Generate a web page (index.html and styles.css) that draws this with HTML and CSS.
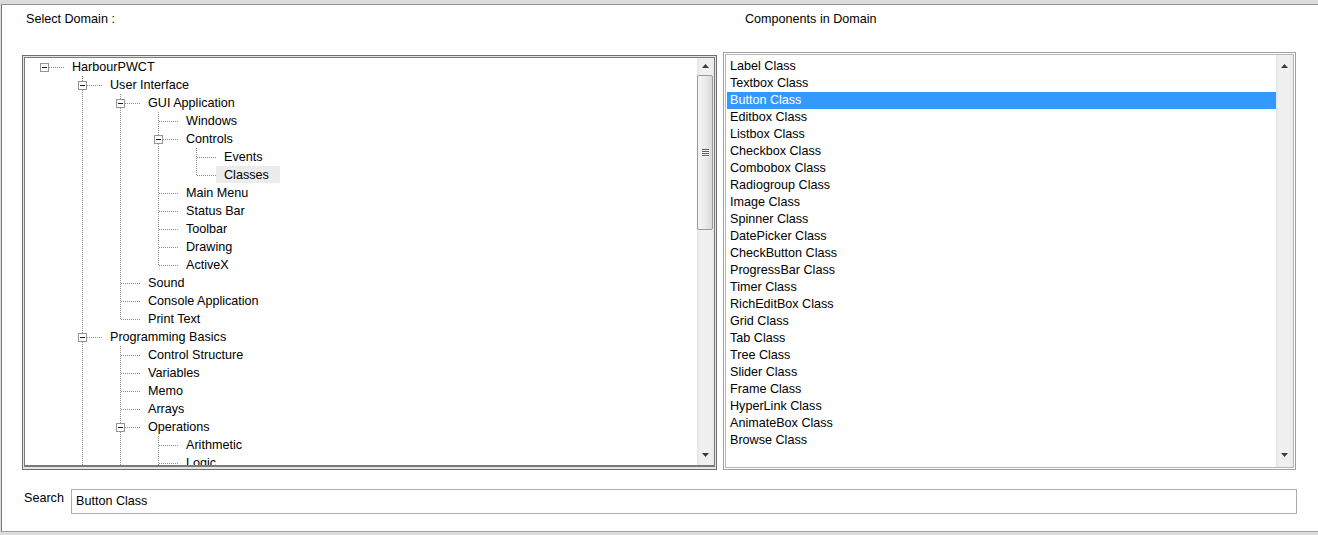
FILE: index.html
```html
<!DOCTYPE html>
<html>
<head>
<meta charset="utf-8">
<title>Select Domain</title>
<link rel="stylesheet" href="styles.css">
</head>
<body>
<div class="window">
  <div class="panes">
    <div class="caption caption-left">Select Domain :</div>
    <div class="caption caption-right">Components in Domain</div>

    <div class="box tree-box">
      <div class="box-inner tree-inner">
        <div class="tree-view">
          <ul class="tree">
            <li class="root"><div class="row"><span class="expander"></span><span class="lbl">HarbourPWCT</span></div>
              <ul>
                <li><div class="row"><span class="expander"></span><span class="lbl">User Interface</span></div>
                  <ul>
                    <li><div class="row"><span class="expander"></span><span class="lbl">GUI Application</span></div>
                      <ul>
                        <li><div class="row"><span class="lbl">Windows</span></div></li>
                        <li><div class="row"><span class="expander"></span><span class="lbl">Controls</span></div>
                          <ul>
                            <li><div class="row"><span class="lbl">Events</span></div></li>
                            <li><div class="row"><span class="lbl lbl-hilite">Classes</span></div></li>
                          </ul>
                        </li>
                        <li><div class="row"><span class="lbl">Main Menu</span></div></li>
                        <li><div class="row"><span class="lbl">Status Bar</span></div></li>
                        <li><div class="row"><span class="lbl">Toolbar</span></div></li>
                        <li><div class="row"><span class="lbl">Drawing</span></div></li>
                        <li><div class="row"><span class="lbl">ActiveX</span></div></li>
                      </ul>
                    </li>
                    <li><div class="row"><span class="lbl">Sound</span></div></li>
                    <li><div class="row"><span class="lbl">Console Application</span></div></li>
                    <li><div class="row"><span class="lbl">Print Text</span></div></li>
                  </ul>
                </li>
                <li><div class="row"><span class="expander"></span><span class="lbl">Programming Basics</span></div>
                  <ul>
                    <li><div class="row"><span class="lbl">Control Structure</span></div></li>
                    <li><div class="row"><span class="lbl">Variables</span></div></li>
                    <li><div class="row"><span class="lbl">Memo</span></div></li>
                    <li><div class="row"><span class="lbl">Arrays</span></div></li>
                    <li><div class="row"><span class="expander"></span><span class="lbl">Operations</span></div>
                      <ul>
                        <li><div class="row"><span class="lbl">Arithmetic</span></div></li>
                        <li><div class="row"><span class="lbl">Logic</span></div></li>
                        <li><div class="row"><span class="lbl">Comparison</span></div></li>
                      </ul>
                    </li>
                    <li><div class="row"><span class="lbl">Procedures</span></div></li>
                  </ul>
                </li>
                <li><div class="row"><span class="lbl">Database</span></div></li>
              </ul>
            </li>
          </ul>
        </div>
        <div class="vscroll">
          <div class="sb-btn sb-up-tree"><svg width="7" height="4" viewBox="0 0 7 4"><polygon points="3.5,0 7,4 0,4" fill="#3c3c3c"/></svg></div>
          <div class="thumb"><span class="grip"></span><span class="grip"></span><span class="grip"></span><span class="grip"></span></div>
          <div class="sb-fill"></div>
          <div class="sb-btn sb-down-tree"><svg width="7" height="4" viewBox="0 0 7 4"><polygon points="0,0 7,0 3.5,4" fill="#3c3c3c"/></svg></div>
        </div>
      </div>
    </div>

    <div class="box list-box">
      <div class="box-inner">
        <div class="list-items">
          <div class="item">Label Class</div>
          <div class="item">Textbox Class</div>
          <div class="item sel">Button Class</div>
          <div class="item">Editbox Class</div>
          <div class="item">Listbox Class</div>
          <div class="item">Checkbox Class</div>
          <div class="item">Combobox Class</div>
          <div class="item">Radiogroup Class</div>
          <div class="item">Image Class</div>
          <div class="item">Spinner Class</div>
          <div class="item">DatePicker Class</div>
          <div class="item">CheckButton Class</div>
          <div class="item">ProgressBar Class</div>
          <div class="item">Timer Class</div>
          <div class="item">RichEditBox Class</div>
          <div class="item">Grid Class</div>
          <div class="item">Tab Class</div>
          <div class="item">Tree Class</div>
          <div class="item">Slider Class</div>
          <div class="item">Frame Class</div>
          <div class="item">HyperLink Class</div>
          <div class="item">AnimateBox Class</div>
          <div class="item">Browse Class</div>
        </div>
        <div class="vscroll">
          <div class="sb-btn sb-up-list"><svg width="7" height="4" viewBox="0 0 7 4"><polygon points="3.5,0 7,4 0,4" fill="#3c3c3c"/></svg></div>
          <div class="sb-fill"></div>
          <div class="sb-btn sb-down"><svg width="7" height="4" viewBox="0 0 7 4"><polygon points="0,0 7,0 3.5,4" fill="#3c3c3c"/></svg></div>
        </div>
      </div>
    </div>
  </div>

  <div class="search-row">
    <label class="search-label" for="search">Search</label>
    <input class="search-input" id="search" type="text" value="Button Class">
  </div>
</div>
</body>
</html>
```

FILE: styles.css
```css
* { box-sizing: border-box; }

html, body { margin: 0; padding: 0; }

body {
  width: 1318px;
  height: 535px;
  overflow: hidden;
  padding: 4px 0 0 1px;
  background: #dcdcdc;
  font-family: "Liberation Sans", Arial, sans-serif;
  font-size: 12.6px;
  color: #000;
}

.window {
  width: 1330px;
  height: 528px;
  background: #fff;
  border-top: 1px solid #969696;
  border-left: 1px solid #7b7b7b;
  border-bottom: 1px solid #a3a3a3;
  padding-left: 20px;
}

.panes {
  display: grid;
  grid-template-columns: 695px 573px;
  grid-template-rows: 47px 418px;
  column-gap: 6px;
}

.caption {
  padding-top: 7px;
  line-height: 14px;
  white-space: nowrap;
}
.caption-left { padding-left: 4px; }
.caption-right { padding-left: 22px; }

.box {
  border: 1px solid #a0a0a0;
  padding: 1px;
  background: #fff;
}
.box-inner {
  height: 100%;
  border: 1px solid #b8b8b8;
  display: flex;
  background: #fff;
}

.tree-box {
  margin-top: 3px;
  height: 415px;
  padding: 1px 1px 2px 1px;
  border-color: #6f6f6f;
  background: #e4e4e4;
}
.tree-inner {
  border-color: #7a7a7a;
  border-bottom-width: 2px;
}

.list-box { height: 418px; }

/* ---------- tree ---------- */
.tree-view {
  flex: 1;
  overflow: hidden;
}
.tree, .tree ul {
  list-style: none;
  margin: 0;
  padding: 0;
}
.tree ul { padding-left: 38px; }
.tree li { position: relative; }
.tree li::before {
  content: "";
  position: absolute;
  left: 19px;
  top: 0;
  bottom: 0;
  width: 1px;
  background-image: linear-gradient(to bottom, #8c8c8c 50%, transparent 50%);
  background-size: 1px 2px;
}
.tree li:last-child::before { bottom: auto; height: 10px; }
.tree li.root::before { display: none; }

.row {
  position: relative;
  height: 18px;
  display: flex;
  padding-left: 39px;
}
.row::before {
  content: "";
  position: absolute;
  left: 20px;
  top: 9px;
  width: 19px;
  height: 1px;
  background-image: linear-gradient(to right, #8c8c8c 50%, transparent 50%);
  background-size: 2px 1px;
}
.expander {
  position: absolute;
  left: 15px;
  top: 5px;
  width: 9px;
  height: 9px;
  border: 1px solid #959595;
  background: #fff;
  z-index: 1;
}
.expander::after {
  content: "";
  position: absolute;
  left: 1px;
  top: 3px;
  width: 5px;
  height: 1px;
  background: #1a1a1a;
}
.lbl {
  height: 17px;
  line-height: 18px;
  padding: 0 11px 0 8px;
  white-space: nowrap;
}
.lbl-hilite { background: #ececec; }

/* ---------- scrollbars ---------- */
.vscroll {
  width: 17px;
  flex: none;
  display: flex;
  flex-direction: column;
  background: linear-gradient(to right, #e4e4e4, #f0f0f0 3px, #f0f0f0 14px, #e9e9e9);
}
.sb-btn {
  height: 17px;
  flex: none;
  display: flex;
  justify-content: center;
  align-items: flex-start;
}
.sb-btn svg { display: block; }
.sb-up-tree { padding-top: 6px; }
.sb-up-list { padding-top: 9px; }
.sb-down { padding-top: 3px; }
.sb-down-tree { padding-top: 5px; }
.sb-fill { flex: 1; }

.thumb {
  height: 155px;
  flex: none;
  margin: 0 1px 0 0;
  border: 1px solid #9a9a9a;
  border-radius: 2px;
  background: linear-gradient(to right, #f5f5f5, #ebebeb 50%, #dadada);
  display: flex;
  flex-direction: column;
  align-items: center;
  justify-content: center;
  gap: 1px;
}
.grip {
  display: block;
  width: 7px;
  height: 1px;
  background: #5c5c5c;
  box-shadow: 0 1px 0 #fafafa;
}

/* ---------- list ---------- */
.list-items {
  flex: 1;
  padding-top: 3px;
  overflow: hidden;
}
.item {
  height: 17px;
  line-height: 17px;
  margin-left: 1px;
  padding-left: 3px;
  white-space: nowrap;
}
.item.sel {
  background: #3399ff;
  color: #fff;
}

/* ---------- search ---------- */
.search-row {
  display: flex;
  align-items: flex-start;
  margin-top: 19px;
}
.search-label {
  width: 49px;
  padding-left: 2px;
  margin-top: 2px;
  line-height: 14px;
}
.search-input {
  width: 1226px;
  height: 25px;
  margin: 0;
  border: 1px solid #acacac;
  padding: 0 0 2px 4px;
  font: inherit;
  color: #000;
  background: #fff;
  outline: none;
}
```
